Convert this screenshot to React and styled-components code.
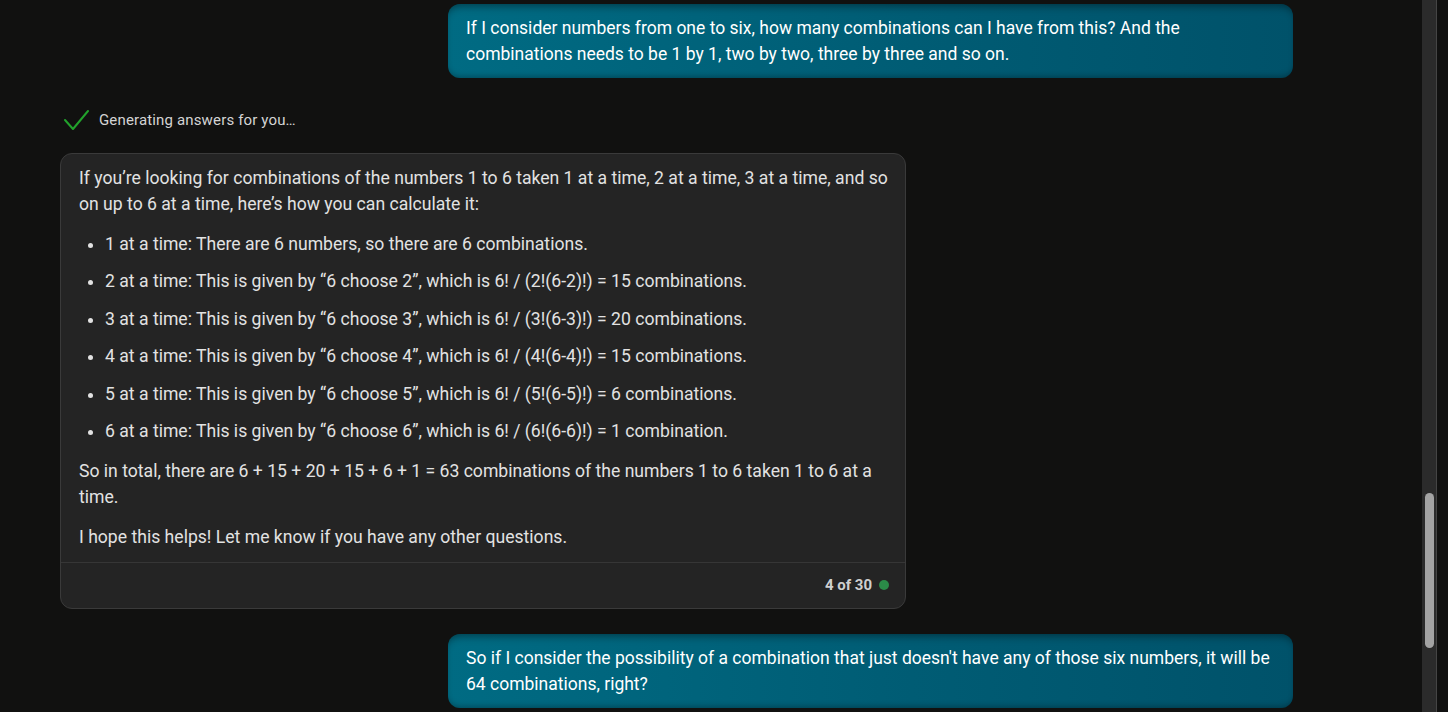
import React from 'react'
import styled, { createGlobalStyle } from 'styled-components'

const GlobalStyle = createGlobalStyle`
  html, body {
    margin: 0;
    padding: 0;
    background: #111110;
    overflow: hidden;
  }
  * {
    box-sizing: border-box;
  }
`

const bullets = [
  '1 at a time: There are 6 numbers, so there are 6 combinations.',
  '2 at a time: This is given by \u201c6 choose 2\u201d, which is 6! / (2!(6-2)!) = 15 combinations.',
  '3 at a time: This is given by \u201c6 choose 3\u201d, which is 6! / (3!(6-3)!) = 20 combinations.',
  '4 at a time: This is given by \u201c6 choose 4\u201d, which is 6! / (4!(6-4)!) = 15 combinations.',
  '5 at a time: This is given by \u201c6 choose 5\u201d, which is 6! / (5!(6-5)!) = 6 combinations.',
  '6 at a time: This is given by \u201c6 choose 6\u201d, which is 6! / (6!(6-6)!) = 1 combination.',
]

const CheckIcon = () => (
  <svg width="26" height="22" viewBox="0 0 26 22" fill="none">
    <polyline
      points="2,11 10,20 25,2"
      stroke="#22a22c"
      strokeWidth="2"
      strokeLinecap="round"
      strokeLinejoin="round"
    />
  </svg>
)

export default function App() {
  return (
    <>
      <GlobalStyle />
      <Screen>
        <ChatPane>
          <UserBubble>
            If I consider numbers from one to six, how many combinations can I have from this? And the
            combinations needs to be 1 by 1, two by two, three by three and so on.
          </UserBubble>

          <StatusRow>
            <CheckIcon />
            <StatusText>Generating answers for you…</StatusText>
          </StatusRow>

          <BotCard>
            <BotBody>
              <Para>
                If you’re looking for combinations of the numbers 1 to 6 taken 1 at a time, 2 at a time, 3 at
                a time, and so on up to 6 at a time, here’s how you can calculate it:
              </Para>
              <List>
                {bullets.map(b => (
                  <Item key={b}>{b}</Item>
                ))}
              </List>
              <Para>
                So in total, there are 6 + 15 + 20 + 15 + 6 + 1 = 63 combinations of the numbers 1 to 6 taken
                1 to 6 at a time.
              </Para>
              <Para>I hope this helps! Let me know if you have any other questions.</Para>
            </BotBody>
            <BotFooter>
              <Counter>4 of 30</Counter>
              <Dot />
            </BotFooter>
          </BotCard>

          <UserBubble top={25}>
            So if I consider the possibility of a combination that just doesn't have any of those six numbers,
            it will be 64 combinations, right?
          </UserBubble>
        </ChatPane>
        <ScrollTrack>
          <Thumb />
        </ScrollTrack>
      </Screen>
    </>
  )
}

const Screen = styled.div`
  display: flex;
  width: 100vw;
  height: 100vh;
  overflow: hidden;
  background: #111110;
  font-family: Roboto, 'Liberation Sans', sans-serif;
`

const ChatPane = styled.div`
  flex: 1;
  display: flex;
  flex-direction: column;
  padding: 4px 129px 0 60px;
  overflow: hidden;
`

const UserBubble = styled.div`
  align-self: flex-end;
  flex-shrink: 0;
  width: 845px;
  margin-top: ${props => props.top || 0}px;
  padding: 11px 18px 11px;
  border-radius: 12px;
  background: linear-gradient(90deg, #006b83 0%, #005c74 55%, #00526a 100%);
  box-shadow: inset 0 7px 8px -5px rgba(0, 0, 0, 0.45), inset 0 -5px 6px -4px rgba(0, 0, 0, 0.35);
  color: #ffffff;
  font-size: 17.5px;
  line-height: 26px;
`

const StatusRow = styled.div`
  display: flex;
  align-items: center;
  gap: 10px;
  height: 24px;
  margin-top: 30px;
  padding-left: 3px;
  flex-shrink: 0;
`

const StatusText = styled.span`
  color: #d4d4d4;
  font-size: 15px;
  letter-spacing: 0.15px;
  margin-top: -1px;
`

const BotCard = styled.div`
  width: 846px;
  margin-top: 21px;
  flex-shrink: 0;
  background: #242424;
  border: 1px solid #3a3a3a;
  border-radius: 12px;
  color: #e2e2e2;
  font-size: 17.6px;
  line-height: 26px;
`

const BotBody = styled.div`
  display: flex;
  flex-direction: column;
  gap: 14px;
  padding: 11px 16px 12px 18px;
`

const Para = styled.p`
  margin: 0;
`

const List = styled.ul`
  display: flex;
  flex-direction: column;
  gap: 11.4px;
  margin: 0;
  padding-left: 26px;
`

const Item = styled.li`
  padding-left: 0;
`

const BotFooter = styled.div`
  display: flex;
  align-items: center;
  justify-content: flex-end;
  gap: 7px;
  height: 46px;
  padding: 0 16px 0 0;
  border-top: 1px solid #363636;
`

const Counter = styled.span`
  color: #cfcfcf;
  font-size: 15px;
  font-weight: 700;
`

const Dot = styled.span`
  width: 10px;
  height: 10px;
  border-radius: 50%;
  background: #2b8a48;
`

const ScrollTrack = styled.div`
  width: 15px;
  flex-shrink: 0;
  margin-right: 11px;
  background: #2b2b2b;
  border-right: 1px solid #454545;
  display: flex;
  justify-content: center;
  padding-left: 1px;
`

const Thumb = styled.div`
  width: 9px;
  height: 155px;
  margin-top: 493px;
  border-radius: 5px;
  background: #a3a3a3;
`
